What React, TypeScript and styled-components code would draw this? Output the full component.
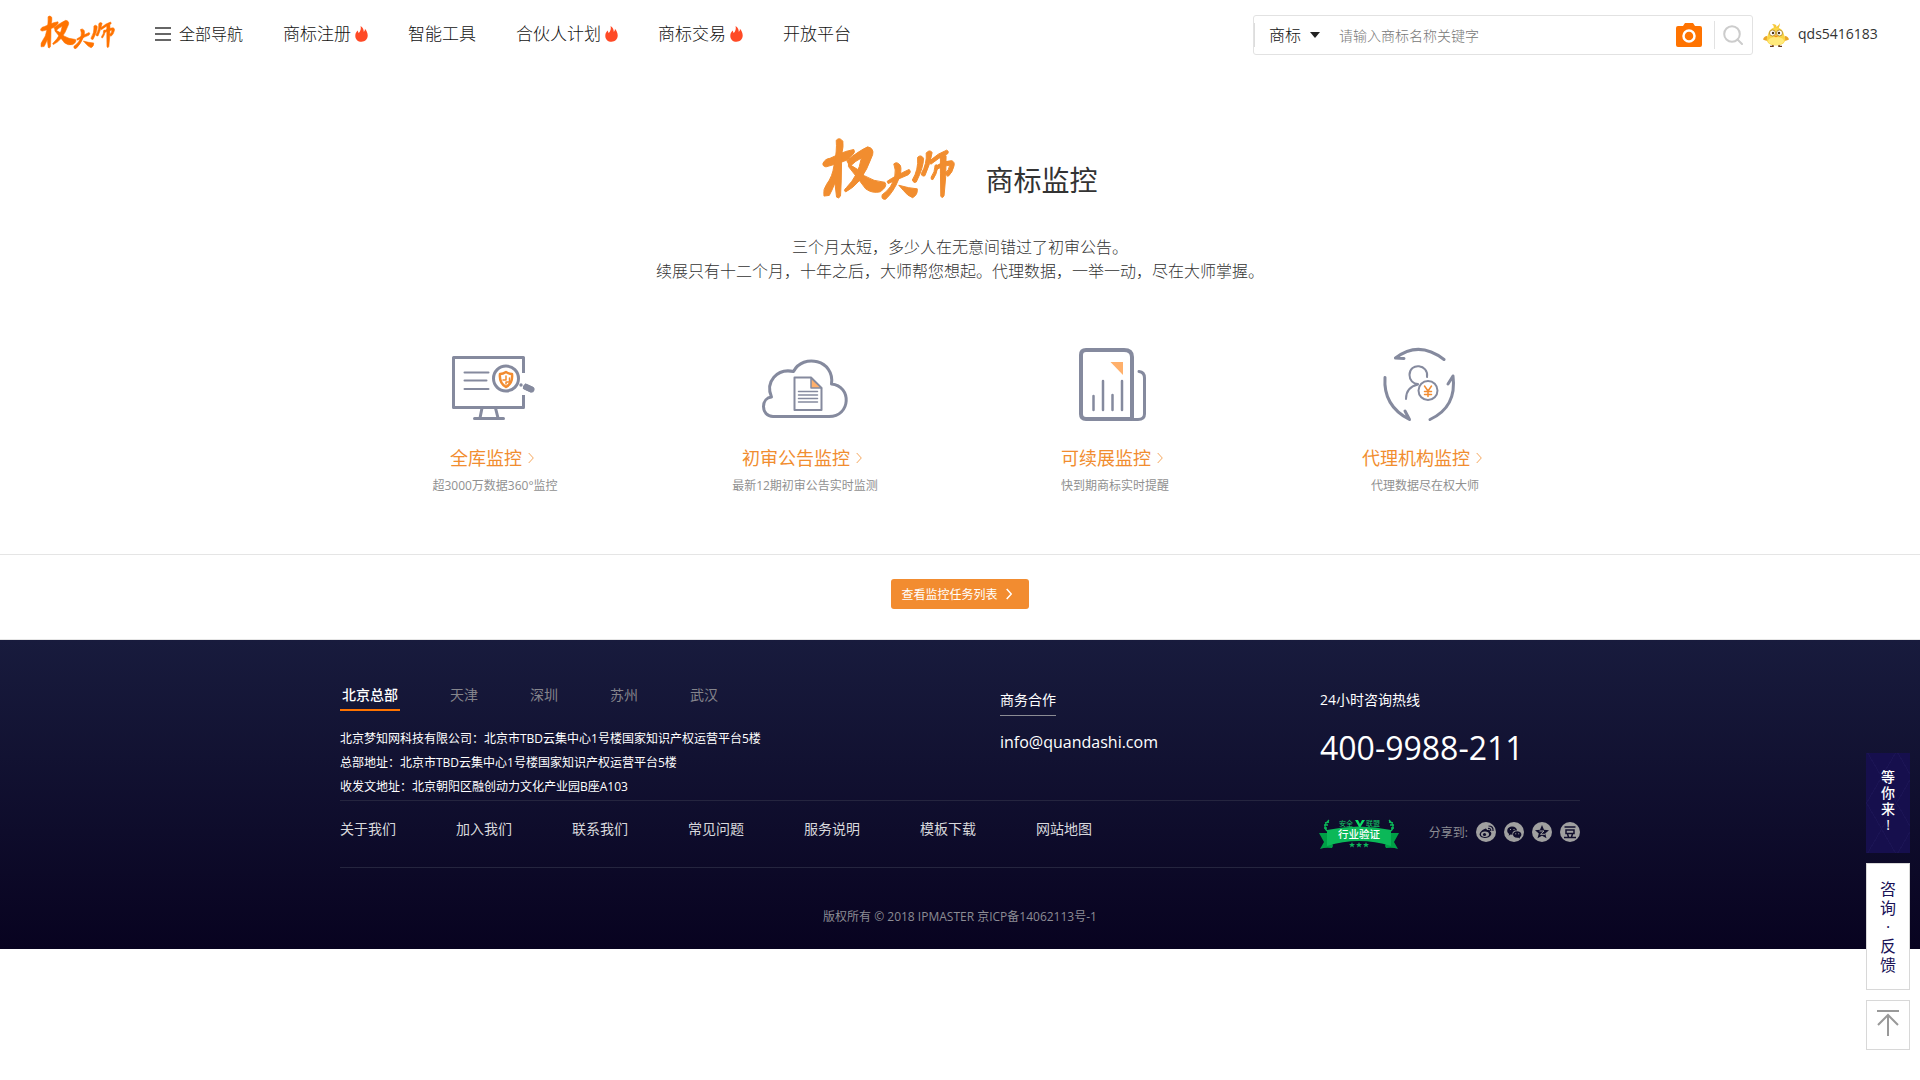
import React, { useState } from 'react';
import styled, { createGlobalStyle, css } from 'styled-components';

const GlobalStyle = createGlobalStyle`
  *, *::before, *::after { box-sizing: border-box; }
  body {
    margin: 0;
    background: #fff;
    color: #333;
    font-family: "Open Sans", "Noto Sans CJK SC", sans-serif;
    font-size: 14px;
  }
  button, input, select { font: inherit; color: inherit; }
  button { border: 0; padding: 0; background: none; cursor: pointer; }
  a { color: inherit; text-decoration: none; }
  h1, h2, h3, p, ul { margin: 0; padding: 0; font-weight: 400; }
  ul { list-style: none; }
  svg { display: block; flex: none; }
`;

/* ---------- header ---------- */

const Header = styled.header`
  display: flex;
  align-items: flex-start;
  padding: 15px 40px 0;
  height: 70px;
`;

const HomeLink = styled.a`
  margin-right: 40px;
`;

const Nav = styled.nav`
  display: flex;
  align-items: center;
  gap: 40px;
  height: 38px;
  color: #111;
  font-size: 17px;
  font-weight: 300;
  line-height: 24px;
  white-space: nowrap;
`;

const MenuButton = styled.button`
  display: flex;
  align-items: center;
  gap: 8px;
  font-size: 16px;
  font-weight: 300;
`;

const NavLink = styled.a`
  display: flex;
  align-items: center;
  gap: 4px;
`;

const HeaderRight = styled.div`
  display: flex;
  align-items: center;
  margin-left: auto;
`;

const SearchForm = styled.form`
  display: flex;
  align-items: center;
  width: 500px;
  height: 40px;
  border: 1px solid #e2e2e2;
  border-radius: 3px;
`;

const SelectWrap = styled.label`
  display: flex;
  align-items: center;
  gap: 8px;
  height: 24px;
  padding-left: 14px;
  border-left: 1px solid #ddd;
`;

const TypeSelect = styled.select`
  appearance: none;
  width: 33px;
  border: 0;
  padding: 0;
  outline: 0;
  background: none;
  color: #111;
  font-size: 16px;
  font-weight: 300;
  line-height: 24px;
`;

const SearchInput = styled.input`
  flex: 1;
  min-width: 0;
  margin-left: 19px;
  padding: 2px 0 0;
  border: 0;
  outline: 0;
  background: none;
  font-weight: 300;
  line-height: 24px;
  &::placeholder { color: #777; opacity: 1; }
`;

const SearchButton = styled.button`
  display: flex;
  align-items: center;
  height: 28px;
  margin-left: 12px;
  padding: 0 9px 0 8px;
  border-left: 1px solid #e2e2e2;
`;

const UserLink = styled.a`
  display: flex;
  align-items: center;
  gap: 9px;
  margin-left: 10px;
  color: #333;
`;

const UserName = styled.span`
  min-width: 82px;
  line-height: 20px;
  padding-bottom: 2px;
`;

/* ---------- hero ---------- */

const Hero = styled.section`
  display: flex;
  flex-direction: column;
  align-items: center;
  padding: 67px 20px 0;
`;

const HeroTitle = styled.h1`
  display: flex;
  align-items: flex-end;
  gap: 30px;
  font-size: 28px;
  line-height: 40px;
`;

const HeroText = styled.p`
  margin-top: 35px;
  color: #333;
  font-size: 16px;
  font-weight: 300;
  line-height: 24px;
  text-align: center;
`;

const Features = styled.ul`
  display: grid;
  grid-template-columns: repeat(4, 1fr);
  max-width: 1240px;
  margin: 61px auto 0;
  padding-bottom: 58px;
`;

const Feature = styled.li`
  display: flex;
  flex-direction: column;
  align-items: center;
`;

const FeatureLink = styled.a`
  display: flex;
  align-items: center;
  gap: 6px;
  margin-top: 20px;
  padding-right: 6px;
  color: #f18d2f;
  font-size: 18px;
  line-height: 28px;
`;

const FeatureNote = styled.p`
  margin-top: 4px;
  color: #909090;
  font-size: 12px;
  line-height: 20px;
`;

const TaskBar = styled.div`
  display: flex;
  justify-content: center;
  padding: 24px 0 30px;
  border-top: 1px solid #e5e5e5;
  border-bottom: 1px solid #e5e5e5;
`;

const TaskLink = styled.a`
  display: flex;
  align-items: center;
  gap: 8px;
  height: 30px;
  padding: 0 17px 0 10px;
  border-radius: 3px;
  background: #f28c30;
  color: #fff;
  font-size: 12px;
`;

/* ---------- footer ---------- */

const Footer = styled.footer`
  padding: 41px 20px 22px;
  background: linear-gradient(#181b3d, #080320);
  color: #fff;
`;

const FooterInner = styled.div`
  max-width: 1240px;
  margin: 0 auto;
`;

const FooterTop = styled.div`
  display: grid;
  grid-template-columns: 660px 320px 1fr;
  border-bottom: 1px solid #25253f;
`;

const Tabs = styled.div`
  display: flex;
  gap: 20px;
`;

const Tab = styled.button<{ $active: boolean }>`
  width: 60px;
  border-bottom: 2px solid transparent;
  color: #85858c;
  line-height: 28px;
  &:first-child { margin-right: 14px; }
  ${p => p.$active && css`
    border-bottom-color: #ff7300;
    color: #fff;
    font-weight: 500;
  `}
`;

const Address = styled.p`
  padding: 16px 0 1px;
  font-size: 12px;
  line-height: 24px;
`;

const Contact = styled.div`
  display: flex;
  flex-direction: column;
  align-items: flex-start;
  padding-top: 9px;
`;

const ContactTitle = styled.h3<{ $underlined?: boolean }>`
  font-size: 14px;
  line-height: 20px;
  ${p => p.$underlined && css`
    padding-bottom: 5px;
    border-bottom: 1px solid #8c8c94;
  `}
`;

const Email = styled.a`
  margin-top: 14px;
  font-size: 16px;
  font-weight: 500;
  line-height: 24px;
`;

const Phone = styled.p`
  margin-top: 18px;
  font-size: 32px;
  line-height: 40px;
`;

const FooterRow = styled.div`
  display: flex;
  align-items: flex-start;
  height: 67px;
  padding-top: 18px;
  border-bottom: 1px solid #25253f;
`;

const FooterLinks = styled.ul`
  display: flex;
  gap: 60px;
  color: #d8d8dc;
  line-height: 20px;
`;

const BadgeLink = styled.a`
  margin-left: auto;
`;

const Share = styled.div`
  display: flex;
  align-items: center;
  gap: 8px;
  height: 26px;
  margin-left: 30px;
  color: #8c8c94;
  font-size: 12px;
`;

const Copyright = styled.p`
  padding-top: 39px;
  color: #8c8c94;
  font-size: 12px;
  line-height: 20px;
  text-align: center;
`;

/* ---------- floating tools ---------- */

const SideTools = styled.aside`
  position: fixed;
  right: 10px;
  bottom: 30px;
  display: flex;
  flex-direction: column;
  gap: 10px;
  width: 44px;
`;

const PromoLink = styled.a`
  display: flex;
  justify-content: center;
  height: 100px;
  padding-top: 16px;
  background:
    repeating-linear-gradient(60deg, transparent 0 25px, #1b1454 25px 26px),
    repeating-linear-gradient(120deg, transparent 0 25px, #1b1454 25px 26px),
    #160f4d;
  color: #fff;
  font-weight: 500;
  line-height: 16px;
`;

const FeedbackLink = styled.a`
  display: flex;
  justify-content: center;
  height: 127px;
  padding-top: 16px;
  border: 1px solid #d8d8d8;
  background: #fff;
  color: #1a1257;
  font-size: 16px;
  line-height: 19px;
`;

const Stacked = styled.span`
  width: 1em;
  line-break: anywhere;
  text-align: center;
`;

const TopButton = styled.button`
  display: flex;
  justify-content: center;
  height: 50px;
  padding-top: 8px;
  border: 1px solid #d8d8d8;
  background: #fff;
`;

/* ---------- drawings ---------- */

function BrushLogo({ width, height, color }: { width: number; height: number; color: string }) {
  return (
    <svg width={width} height={height} viewBox="128 50 402 192" preserveAspectRatio="none" fill={color} stroke={color} strokeWidth="3" strokeLinejoin="round" role="img" aria-label="权大师">
      <path d="M131 130Q138 116 152 115L178 103 200 94 224 88Q230 95 220 105L202 121Q168 134 140 141 129 139 131 130Z" />
      <path d="M171 60Q181 49 191 63 193 80 189 95L187 132Q187 182 184 230 178 240 172 233L167 190Q158 214 150 228L134 230Q130 210 142 194 160 170 164 138 174 92 171 60Z" />
      <path d="M203 122Q240 92 266 80 286 84 281 104 264 152 242 182 222 206 200 217 191 214 202 204 238 168 247 114 230 122 212 140Z" />
      <path d="M208 132Q240 148 256 168 284 186 318 188 328 200 304 217 280 223 260 208 238 178 208 140Z" />
      <path d="M325 185Q348 169 391 149 400 155 389 165 352 181 328 192Z" />
      <path d="M345 132Q355 123 365 137 370 152 360 178 345 217 320 240 306 241 310 226 340 205 348 170 352 150 345 132Z" />
      <path d="M360 197Q390 206 416 208 418 226 402 235 386 229 375 214Z" />
      <path d="M417 112Q427 102 435 115 435 142 413 187 405 193 401 181 420 150 417 112Z" />
      <path d="M443 99Q452 87 461 97 456 130 439 168 430 172 428 162 446 130 443 99Z" />
      <path d="M452 124Q480 98 505 90 513 93 508 101 480 113 457 133Z" />
      <path d="M470 136Q478 132 478 142 474 165 463 180 456 181 458 172 469 158 470 136Z" />
      <path d="M470 140Q495 122 520 122 530 126 527 138 522 160 509 170 502 166 500 160 512 152 514 136 495 136 474 149Z" />
      <path d="M486 106Q497 96 503 108L502 170 497 228Q492 240 487 230L486 160Z" />
    </svg>
  );
}

const Flame = () => (
  <svg width="13" height="16" viewBox="0 0 13 16" fill="#ff4a26" aria-hidden="true">
    <path d="M5.6 0C8 1.600 8.900 3.700 8.700 5.800 9.700 5.200 10 4 9.900 2.800 11.700 4.700 12.700 7 12.700 9.600 12.700 13.200 10 15.800 6.500 15.800 3 15.800.3 13.200.3 9.900.3 7.400 1.300 5.700 3 4.600 3 5.700 3.200 6.400 3.800 6.900 5.600 5.300 6.200 2.700 5.600 0Z" />
  </svg>
);

const Chevron = ({ w, color, stroke }: { w: number; color: string; stroke: number }) => (
  <svg width={w} height={w * 2} viewBox="0 0 6 12" fill="none" stroke={color} strokeWidth={stroke} aria-hidden="true">
    <path d="M.7 1 5.300 6 .7 11" />
  </svg>
);

const Avatar = () => (
  <svg width="26" height="24" viewBox="0 0 26 24" aria-hidden="true">
    <path d="M9 1Q14 1 13.500 4 16 2 17 0 17 4 14.500 7L10 7Q12 3 9 1Z" fill="#f5c73a" />
    <path d="M4 13Q1 13 0 16.500 3 18.500 6 17ZM22 13Q25 13 26 16.500 23 18.500 20 17Z" fill="#e9a62a" />
    <path d="M10 21.500V23.500H7M16 21.500V23.500H19" stroke="#6b3a16" strokeWidth="1.500" fill="none" />
    <path d="M13 4.500C19 4.500 20.500 9 21.500 13 24 19 20 22.500 13 22.500S2 19 4.500 13C5.500 9 7 4.500 13 4.500Z" fill="#fbd545" />
    <ellipse cx="13" cy="18" rx="8" ry="4" fill="#ffea7c" />
    <circle cx="9.500" cy="10" r="3" fill="#fff" stroke="#a87c1b" strokeWidth=".8" />
    <circle cx="16.500" cy="10" r="3" fill="#fff" stroke="#a87c1b" strokeWidth=".8" />
    <circle cx="10" cy="10" r="1.200" fill="#4a3010" />
    <circle cx="16" cy="10" r="1.200" fill="#4a3010" />
    <path d="M11 13Q13 12 15 13 13 15.500 11 13Z" fill="#f08c1e" />
  </svg>
);

const lineArt = { width: 90, height: 80, fill: 'none', stroke: '#858a9e', strokeLinecap: 'round', strokeLinejoin: 'round', 'aria-hidden': true } as const;

const MonitorIcon = () => (
  <svg {...lineArt} viewBox="0 0 90 80" strokeWidth="3">
    <path d="M73.500 29V13.500H3.500V63.500H73.500V51" strokeLinecap="butt" />
    <path d="M32 64 30 74M45.500 64 48 74M24.500 74.500H53.500" />
    <path d="M14.500 28.500H38.500M14.500 36.500H36.500M14.500 45H38.500" strokeWidth="2" />
    <circle cx="56" cy="34.500" r="12.500" />
    <path d="M56 28Q59 30 62 30 63 39 56 43 49 39 50 30 53 30 56 28Z" stroke="#f28c30" strokeWidth="2.500" />
    <path d="M56 32V36H53M59.500 34V38H56V40" stroke="#f28c30" strokeWidth="1.500" />
    <circle cx="71" cy="41" r="1.700" fill="#858a9e" stroke="none" />
    <path d="M74 42 82.500 46" strokeWidth="6" strokeLinecap="butt" />
    <path d="M76 43 81.500 45.500" strokeWidth="6" />
  </svg>
);

const CloudIcon = () => (
  <svg {...lineArt} viewBox="0 0 90 80" strokeWidth="3">
    <path d="M13 72.500C7 72.500 3.500 68 3.500 62.500 3.500 57 7 53.500 11.500 53 5 38 17 24 33.500 27.500 43 9 75 16 71.500 40 92 42 91 72.500 69 72.500Z" />
    <path d="M34.500 33.500H51L61.500 44V66H34.500Z" strokeWidth="2" />
    <path d="M51 34V44H61.500Z" fill="#ffb06b" strokeWidth="1.500" />
    <path d="M38.500 47.500H57.500M38.500 51H57.500M38.500 54.500H57.500M38.500 58H57.500" strokeWidth="1.500" />
  </svg>
);

const ReportIcon = () => (
  <svg {...lineArt} viewBox="0 0 90 80" strokeWidth="4">
    <path d="M16 6H54Q62 6 62 13V75H16Q11 75 11 70V11Q11 6 16 6Z" />
    <path d="M63 75.500H68Q74.500 75.500 74.500 70V34Q74.500 28 69 27.500" strokeWidth="3" />
    <path d="M40.500 18H53V31Z" fill="#ffb06b" stroke="none" />
    <path d="M23.500 52V66M33 37V66M42.500 51V66M52 37V66" strokeWidth="2.500" />
  </svg>
);

const AgencyIcon = () => (
  <svg {...lineArt} viewBox="0 0 90 80" strokeWidth="3">
    <path d="M64 15.500Q39-4 15.500 14L24 14.500" />
    <path d="M5 33.500Q3 62 29.500 75.500L25 67" />
    <path d="M50 75.500Q77 63 73 32L68 40" />
    <path d="M47 33C49 20 29.500 18 29.500 31 29.500 36 33 40 38 40M26 55Q26 43 38 40.500" strokeWidth="2" />
    <circle cx="48" cy="46.500" r="9.500" strokeWidth="2" />
    <path d="M44.500 42 48 47 51.500 42M48 47V52.500M44.500 47.500H51.500M44.500 50.500H51.500" stroke="#f28c30" strokeWidth="1.500" />
  </svg>
);

const VerifyBadge = () => (
  <svg width="80" height="31" viewBox="0 0 80 31" role="img" aria-label="安全联盟行业验证">
    <path d="M0 14H10L14 27 13 29Q6 28 1 30L5 23ZM80 14H70L66 27 67 29Q74 28 79 30L75 23Z" fill="#00a046" />
    <path d="M8 11Q40 4 72 11V27Q40 17 8 27Z" fill="#0bb858" />
    <path d="M10 1Q3 7 8 12M70 1Q77 7 72 12M10 3 6 4M9 6 5 6M8 9 5 9M70 3 74 4M71 6 75 6M72 9 75 9" stroke="#0bb858" strokeWidth="1.300" fill="none" />
    <text x="20" y="7" fontSize="7" fill="#12c865">安全</text>
    <text x="47" y="7" fontSize="7" fill="#12c865">联盟</text>
    <path d="M36 1H39L41 5 43 1H46L41.500 8H40Z" fill="#0bdc64" />
    <text x="40" y="19" fontSize="10.500" fontWeight="500" textAnchor="middle" fill="#fff">行业验证</text>
    {[33, 40, 47].map(x => (
      <path key={x} transform={`translate(${x - 3} 23)`} d="M3 0 3.800 2H6L4.300 3.400 5 5.500 3 4.200 1 5.500 1.700 3.400 0 2H2.200Z" fill="#0bb858" />
    ))}
  </svg>
);

const ink = '#100e2c';
const shareIcons = [
  {
    name: '新浪微博',
    art: (
      <>
        <path d="M8.500 7Q10.500 5.500 11 8 14.500 7 14 9.500 16 10.500 15 13 13 16.200 8.500 16 4 15.500 3.500 12.500 4 9 8.500 7Z" fill={ink} />
        <ellipse cx="9" cy="12.300" rx="4" ry="2.700" fill="#a0a0a0" />
        <circle cx="8.500" cy="12.500" r="1.600" fill={ink} />
        <path d="M12 6.500Q15 6 14.800 9M12.500 4Q17.500 4 17 9" fill="none" stroke={ink} strokeWidth="1.200" />
      </>
    ),
  },
  {
    name: '微信',
    art: (
      <>
        <path d="M8 4.500C11 4.500 13 6.300 13 8.600 9.500 8.500 8 10.500 8.600 12.700L6.500 12.600 4.700 13.800 5.100 12C1.800 10 3 4.500 8 4.500Z" fill={ink} />
        <path d="M13 9.300C18 9.300 18.500 14 15.800 15.300L16 16.500 14.500 15.700C7.500 16.500 7.500 9.300 13 9.300Z" fill={ink} />
        <path d="M6 7.500h1M9.500 7.500h1M11.200 11.800h1M14.200 11.800h1" stroke="#a0a0a0" />
      </>
    ),
  },
  {
    name: 'QQ空间',
    art: (
      <>
        <path d="M10 3 12 7.800 17 8.200 13.200 11.400 14.500 16.300 10 13.700 5.500 16.300 6.800 11.400 3 8.200 8 7.800Z" fill={ink} />
        <path d="M7.500 9H12L8.500 12.300H13" fill="none" stroke="#a0a0a0" />
      </>
    ),
  },
  {
    name: '豆瓣',
    art: <path d="M4.500 5H15.500M6 8H14V11.500H6ZM7.500 12 8.500 15M12.500 12 11.500 15M4 15.500H16" fill="none" stroke={ink} strokeWidth="1.500" />,
  },
];

/* ---------- data ---------- */

const navItems = [
  { label: '商标注册', hot: true },
  { label: '智能工具', hot: false },
  { label: '合伙人计划', hot: true },
  { label: '商标交易', hot: true },
  { label: '开放平台', hot: false },
];

const features = [
  { title: '全库监控', note: '超3000万数据360°监控', Icon: MonitorIcon },
  { title: '初审公告监控', note: '最新12期初审公告实时监测', Icon: CloudIcon },
  { title: '可续展监控', note: '快到期商标实时提醒', Icon: ReportIcon },
  { title: '代理机构监控', note: '代理数据尽在权大师', Icon: AgencyIcon },
];

const cities = ['北京总部', '天津', '深圳', '苏州', '武汉'];
const footerLinks = ['关于我们', '加入我们', '联系我们', '常见问题', '服务说明', '模板下载', '网站地图'];

export default function App() {
  const [city, setCity] = useState(cities[0]);

  return (
    <>
      <GlobalStyle />
      <Header>
        <HomeLink href="#"><BrushLogo width={75} height={34} color="#ff7300" /></HomeLink>
        <Nav>
          <MenuButton type="button">
            <svg width="16" height="14" viewBox="0 0 16 14" fill="#666" aria-hidden="true">
              <path d="M0 0H16V2H0ZM0 6H16V8H0ZM0 12H16V14H0Z" />
            </svg>
            全部导航
          </MenuButton>
          {navItems.map(item => (
            <NavLink href="#" key={item.label}>{item.label}{item.hot && <Flame />}</NavLink>
          ))}
        </Nav>
        <HeaderRight>
          <SearchForm onSubmit={e => e.preventDefault()}>
            <SelectWrap>
              <TypeSelect aria-label="搜索类型"><option>商标</option></TypeSelect>
              <svg width="10" height="6" viewBox="0 0 10 6" fill="#222" aria-hidden="true"><path d="M0 0H10L5 6Z" /></svg>
            </SelectWrap>
            <SearchInput aria-label="关键字" placeholder="请输入商标名称关键字" />
            <button type="button" aria-label="图片搜索">
              <svg width="26" height="24" viewBox="0 0 26 24" aria-hidden="true">
                <path d="M2 3H7L9 0H17L19 3H24Q26 3 26 5V22Q26 24 24 24H2Q0 24 0 22V5Q0 3 2 3Z" fill="#ff7300" />
                <circle cx="13" cy="13" r="5.500" fill="none" stroke="#fff" strokeWidth="2.500" />
              </svg>
            </button>
            <SearchButton type="submit" aria-label="搜索">
              <svg width="20" height="20" viewBox="0 0 20 20" fill="none" stroke="#ccc" strokeWidth="2" aria-hidden="true">
                <circle cx="9" cy="9" r="7.800" /><path d="M14.500 14.500 19 19" strokeLinecap="round" />
              </svg>
            </SearchButton>
          </SearchForm>
          <UserLink href="#"><Avatar /><UserName>qds5416183</UserName></UserLink>
        </HeaderRight>
      </Header>

      <main>
        <Hero>
          <HeroTitle><BrushLogo width={133} height={63} color="#f18d2f" />商标监控</HeroTitle>
          <HeroText>
            三个月太短，多少人在无意间错过了初审公告。<br />
            续展只有十二个月，十年之后，大师帮您想起。代理数据，一举一动，尽在大师掌握。
          </HeroText>
        </Hero>
        <Features>
          {features.map(({ title, note, Icon }) => (
            <Feature key={title}>
              <Icon />
              <FeatureLink href="#">{title}<Chevron w={6} color="#f5a65c" stroke={1} /></FeatureLink>
              <FeatureNote>{note}</FeatureNote>
            </Feature>
          ))}
        </Features>
        <TaskBar>
          <TaskLink href="#">查看监控任务列表<Chevron w={6} color="#fff" stroke={1.5} /></TaskLink>
        </TaskBar>
      </main>

      <Footer>
        <FooterInner>
          <FooterTop>
            <div>
              <Tabs role="tablist">
                {cities.map(c => (
                  <Tab key={c} type="button" role="tab" aria-selected={c === city} $active={c === city} onClick={() => setCity(c)}>{c}</Tab>
                ))}
              </Tabs>
              <Address>
                北京梦知网科技有限公司：北京市TBD云集中心1号楼国家知识产权运营平台5楼<br />
                总部地址：北京市TBD云集中心1号楼国家知识产权运营平台5楼<br />
                收发文地址：北京朝阳区融创动力文化产业园B座A103
              </Address>
            </div>
            <Contact>
              <ContactTitle $underlined>商务合作</ContactTitle>
              <Email href="mailto:info@quandashi.com">info@quandashi.com</Email>
            </Contact>
            <Contact>
              <ContactTitle>24小时咨询热线</ContactTitle>
              <Phone>400-9988-211</Phone>
            </Contact>
          </FooterTop>
          <FooterRow>
            <FooterLinks>
              {footerLinks.map(label => <li key={label}><a href="#">{label}</a></li>)}
            </FooterLinks>
            <BadgeLink href="#"><VerifyBadge /></BadgeLink>
            <Share>
              分享到:
              {shareIcons.map(icon => (
                <a href="#" key={icon.name} aria-label={icon.name}>
                  <svg width="20" height="20" viewBox="0 0 20 20" aria-hidden="true">
                    <circle cx="10" cy="10" r="10" fill="#a0a0a0" />
                    {icon.art}
                  </svg>
                </a>
              ))}
            </Share>
          </FooterRow>
          <Copyright>版权所有 © 2018 IPMASTER 京ICP备14062113号-1</Copyright>
        </FooterInner>
      </Footer>

      <SideTools>
        <PromoLink href="#"><Stacked>等你来!</Stacked></PromoLink>
        <FeedbackLink href="#"><Stacked>咨询·反馈</Stacked></FeedbackLink>
        <TopButton type="button" aria-label="返回顶部">
          <svg width="22" height="28" viewBox="0 0 22 28" fill="none" stroke="#999" strokeWidth="2" aria-hidden="true">
            <path d="M0 2H22M11 6V27M1 16 11 6 21 16" />
          </svg>
        </TopButton>
      </SideTools>
    </>
  );
}
